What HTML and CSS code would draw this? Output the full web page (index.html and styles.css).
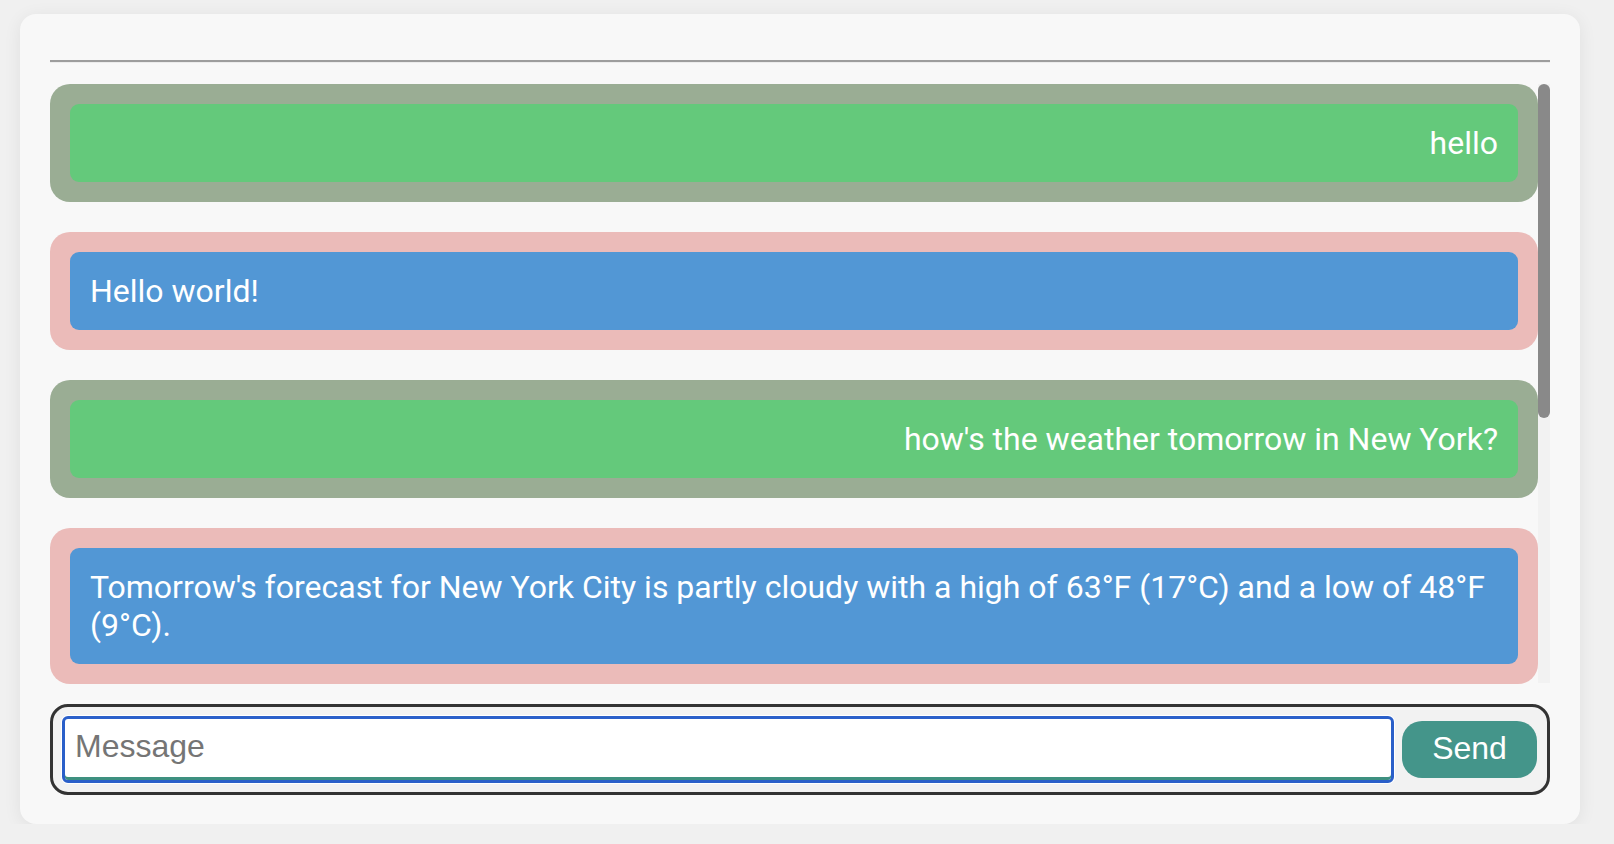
FILE: index.html
```html
<!DOCTYPE html>
<html lang="en">
<head>
<meta charset="utf-8">
<title>Chat</title>
<link rel="stylesheet" href="styles.css">
</head>
<body>
<main class="card">
  <hr class="divider">
  <section class="thread">
    <div class="messages">
      <div class="msg msg-user"><div class="bubble">hello</div></div>
      <div class="msg msg-bot"><div class="bubble">Hello world!</div></div>
      <div class="msg msg-user"><div class="bubble">how's the weather tomorrow in New York?</div></div>
      <div class="msg msg-bot"><div class="bubble">Tomorrow's forecast for New York City is partly cloudy with a high of 63°F (17°C) and a low of 48°F (9°C).</div></div>
    </div>
    <div class="scrollbar"><div class="scrollbar-thumb"></div></div>
  </section>
  <form class="composer">
    <input class="composer-input" type="text" placeholder="Message">
    <button class="composer-send" type="button">Send</button>
  </form>
</main>
</body>
</html>
```
FILE: styles.css
```css
* { box-sizing: border-box; }

html, body {
  margin: 0;
  background: #f0f0f0;
}

body {
  padding: 14px 0 0 20px;
  font-family: Roboto, "Liberation Sans", sans-serif;
}

.card {
  width: 1560px;
  height: 810px;
  background: #f8f8f8;
  border-radius: 16px;
  box-shadow: 0 3px 18px rgba(0, 0, 0, 0.07);
  padding: 30px 30px 29px 30px;
  display: flex;
  flex-direction: column;
}

.divider {
  margin: 16px 0 21px 0;
  border: 0;
  border-top: 2px solid #9d9d9d;
  border-bottom: 1px solid #ececec;
  height: 0;
}

.thread {
  height: 599px;
  flex: none;
  display: flex;
}

.messages {
  flex: 1;
  min-width: 0;
  display: flex;
  flex-direction: column;
  gap: 30px;
}

.scrollbar {
  width: 12px;
  flex: none;
  background: #f2f2f2;
}

.scrollbar-thumb {
  height: 334px;
  background: #898989;
  border-radius: 6px;
}

.msg {
  flex-shrink: 0;
  padding: 20px;
  border-radius: 20px;
}

.bubble {
  padding: 20px;
  border-radius: 9px;
  color: #ffffff;
  font-size: 32px;
  line-height: 38px;
}

.msg-user { background: #9aad94; }
.msg-user .bubble { background: #64c97b; text-align: right; }

.msg-bot { background: #ebbbb9; }
.msg-bot .bubble { background: #5297d5; text-align: left; }

.composer {
  margin: 21px 0 0 0;
  height: 91px;
  border: 3px solid #333333;
  border-radius: 18px;
  background: #f2f2f2;
  display: flex;
  align-items: center;
  gap: 8px;
  padding: 9px 10px 9px 9px;
}

.composer-input {
  flex: 1;
  min-width: 0;
  height: 67px;
  border: 3px solid #2a5fc9;
  border-radius: 6px;
  box-shadow: 0 0 0 1px #ffffff, inset 0 -3px 0 #3e9080;
  background: #ffffff;
  outline: none;
  padding: 0 10px 6px 10px;
  font-family: "Liberation Sans", Arial, sans-serif;
  font-size: 32px;
  line-height: 40px;
  color: #222;
}

.composer-input::placeholder {
  color: #757575;
}

.composer-send {
  flex: none;
  width: 135px;
  height: 57px;
  border: none;
  border-radius: 20px;
  background: #44958a;
  color: #ffffff;
  font-family: "Liberation Sans", Arial, sans-serif;
  font-size: 32px;
  line-height: 40px;
  padding: 0 0 4px 0;
}
```
